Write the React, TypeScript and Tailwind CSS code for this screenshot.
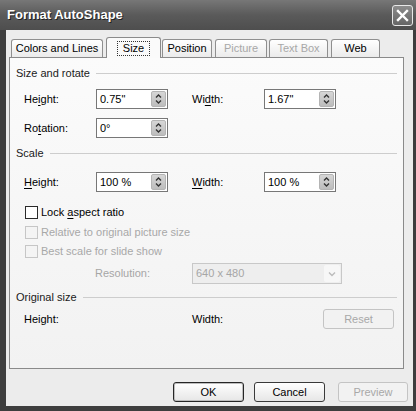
import React from 'react';

const font = { fontFamily: '"Liberation Sans", Arial, sans-serif' };

function Spin() {
  return (
    <div className="ml-auto mr-[1px] flex h-[16px] w-[15px] flex-col items-center justify-center rounded-[2px] border border-[#b4b4b4] bg-gradient-to-b from-[#d6d6d6] to-[#bdbdbd]">
      <svg width="7" height="12" viewBox="0 0 7 12">
        <path d="M1 4.5 L3.5 2 L6 4.5" fill="none" stroke="#333" strokeWidth="1.4" />
        <path d="M1 7.5 L3.5 10 L6 7.5" fill="none" stroke="#333" strokeWidth="1.4" />
      </svg>
    </div>
  );
}

function SpinInput({ value }: { value: string }) {
  return (
    <div className="flex h-[20px] w-[72px] items-center border border-[#777] bg-white pl-[3px] text-[11px] text-black">
      <span>{value}</span>
      <Spin />
    </div>
  );
}

function Label({ children, disabled }: { children: React.ReactNode; disabled?: boolean }) {
  return (
    <span className={`w-[72px] shrink-0 text-[11px] ${disabled ? 'text-[#a6a6a6]' : 'text-black'}`}>
      {children}
    </span>
  );
}

function Group({ title, className = '' }: { title: string; className?: string }) {
  return (
    <div className={`flex h-[16px] items-center ${className}`}>
      <span className="text-[11px] text-[#1a1a1a]">{title}</span>
      <div className="ml-[6px] h-px flex-1 bg-[#cdcdcd]" />
    </div>
  );
}

function Check({ label, disabled, className = '' }: { label: React.ReactNode; disabled?: boolean; className?: string }) {
  return (
    <div className={`flex h-[13px] items-center pl-[9px] ${className}`}>
      <div
        className={`h-[13px] w-[13px] shrink-0 border ${
          disabled ? 'border-[#c6c6c6] bg-[#f4f4f4]' : 'border-[#2a2a2a] bg-white'
        }`}
      />
      <span className={`ml-[3px] text-[11px] ${disabled ? 'text-[#a8a8a8]' : 'text-black'}`}>{label}</span>
    </div>
  );
}

function Tab({
  label,
  ml,
  w,
  selected,
  disabled,
}: {
  label: string;
  ml: string;
  w: string;
  selected?: boolean;
  disabled?: boolean;
}) {
  if (selected) {
    return (
      <div
        className={`${ml} ${w} relative z-10 -mb-px flex h-[21px] items-center justify-center rounded-t-[3px] border border-b-0 border-[#8a8a8a] bg-[#fafafa]`}
      >
        <span className="border border-dotted border-[#333] px-[5px] leading-[13px] text-[11px] text-black">{label}</span>
      </div>
    );
  }
  return (
    <div
      className={`${ml} ${w} flex h-[18px] items-center justify-center rounded-t-[3px] border border-b-0 border-[#8f8f8f] bg-gradient-to-b from-white to-[#ebebeb] text-[11px] ${
        disabled ? 'text-[#a8a8a8]' : 'text-black'
      }`}
    >
      {label}
    </div>
  );
}

function Btn({ label, disabled, def, className = '' }: { label: string; disabled?: boolean; def?: boolean; className?: string }) {
  return (
    <div
      className={`flex h-[20px] items-center justify-center rounded-[3px] border text-[11px] ${
        disabled
          ? 'border-[#c4c4c4] bg-[#f2f2f2] text-[#a8a8a8]'
          : `${def ? 'border-[#262626] shadow-[inset_0_0_0_1px_#bdbdbd]' : 'border-[#3a3a3a]'} bg-gradient-to-b from-white to-[#e6e6e6] text-black`
      } ${className}`}
    >
      {label}
    </div>
  );
}

export default function App() {
  return (
    <div className="flex h-[411px] w-[416px] flex-col overflow-hidden bg-[#3e3e3e]" style={font}>
      {/* Title bar */}
      <div className="flex h-[30px] shrink-0 items-center bg-gradient-to-b from-[#777] via-[#5a5a5a] to-[#4e4e4e] pl-[7px] pr-[3px]">
        <span className="text-[13px] font-bold text-white [text-shadow:1px_1px_0_#222]">Format AutoShape</span>
        <div className="ml-auto mt-[1px] flex h-[21px] w-[21px] items-center justify-center rounded-[3px] border border-[#e8e8e8] bg-gradient-to-b from-[#8c8c8c] to-[#666]">
          <svg width="13" height="13" viewBox="0 0 13 13">
            <path d="M2 2 L11 11 M11 2 L2 11" stroke="white" strokeWidth="2.4" strokeLinecap="square" />
          </svg>
        </div>
      </div>

      {/* Body */}
      <div className="flex flex-1 flex-col border-b-[5px] border-l-[6px] border-r-[3px] border-[#3e3e3e] bg-[#ececec] pl-[3px] pt-[7px]">
        {/* Tabs */}
        <div className="flex h-[20px] items-end">
          <Tab label="Colors and Lines" ml="ml-[2px]" w="w-[92px]" />
          <Tab label="Size" ml="ml-[3px]" w="w-[55px]" selected />
          <Tab label="Position" ml="ml-[1px]" w="w-[50px]" />
          <Tab label="Picture" ml="ml-[3px]" w="w-[52px]" disabled />
          <Tab label="Text Box" ml="ml-[2px]" w="w-[59px]" disabled />
          <Tab label="Web" ml="ml-[3px]" w="w-[49px]" />
        </div>

        {/* Panel */}
        <div className="flex h-[312px] w-[395px] flex-col border border-[#8a8a8a] bg-gradient-to-b from-[#fbfbfb] to-[#f2f2f2] px-[6px]">
          <Group title="Size and rotate" className="mt-[7px]" />
          <div className="mt-[8px] flex h-[20px] items-center pl-[8px]">
            <Label>
              He<u className="underline-offset-2">i</u>ght:
            </Label>
            <SpinInput value={'0.75"'} />
            <div className="w-[24px]" />
            <Label>
              Wi<u className="underline-offset-2">d</u>th:
            </Label>
            <SpinInput value={'1.67"'} />
          </div>
          <div className="mt-[9px] flex h-[20px] items-center pl-[8px]">
            <Label>
              Ro<u className="underline-offset-2">t</u>ation:
            </Label>
            <SpinInput value="0°" />
          </div>

          <Group title="Scale" className="mt-[7px]" />
          <div className="mt-[11px] flex h-[20px] items-center pl-[8px]">
            <Label>
              <u className="underline-offset-2">H</u>eight:
            </Label>
            <SpinInput value="100 %" />
            <div className="w-[24px]" />
            <Label>
              <u className="underline-offset-2">W</u>idth:
            </Label>
            <SpinInput value="100 %" />
          </div>
          <Check
            className="mt-[14px]"
            label={
              <>
                Lock <u className="underline-offset-2">a</u>spect ratio
              </>
            }
          />
          <Check className="mt-[7px]" label="Relative to original picture size" disabled />
          <Check className="mt-[6px]" label="Best scale for slide show" disabled />
          <div className="mt-[5px] flex h-[21px] items-center pl-[79px]">
            <span className="w-[97px] shrink-0 text-[11px] text-[#a6a6a6]">Resolution:</span>
            <div className="flex h-[21px] w-[150px] items-center border border-[#c8c8c8] bg-[#eeeeee] pl-[3px] text-[11px] text-[#a6a6a6]">
              640 x 480
              <div className="ml-auto mr-[1px] flex h-[17px] w-[16px] items-center justify-center rounded-[2px] bg-[#f7f7f7]">
                <svg width="8" height="6" viewBox="0 0 8 6">
                  <path d="M1 1.5 L4 4.5 L7 1.5" fill="none" stroke="#bcbcbc" strokeWidth="1.4" />
                </svg>
              </div>
            </div>
          </div>

          <Group title="Original size" className="mt-[5px]" />
          <div className="mt-[4px] flex h-[20px] items-center pl-[8px]">
            <Label>Height:</Label>
            <div className="w-[96px]" />
            <Label>Width:</Label>
            <Btn label="Reset" disabled className="ml-auto mr-[3px] w-[71px]" />
          </div>
        </div>

        {/* Buttons */}
        <div className="mt-[13px] flex justify-end pr-[5px]">
          <Btn label="OK" def className="w-[71px]" />
          <Btn label="Cancel" className="ml-[10px] w-[71px]" />
          <Btn label="Preview" disabled className="ml-[13px] w-[70px]" />
        </div>
      </div>
    </div>
  );
}
